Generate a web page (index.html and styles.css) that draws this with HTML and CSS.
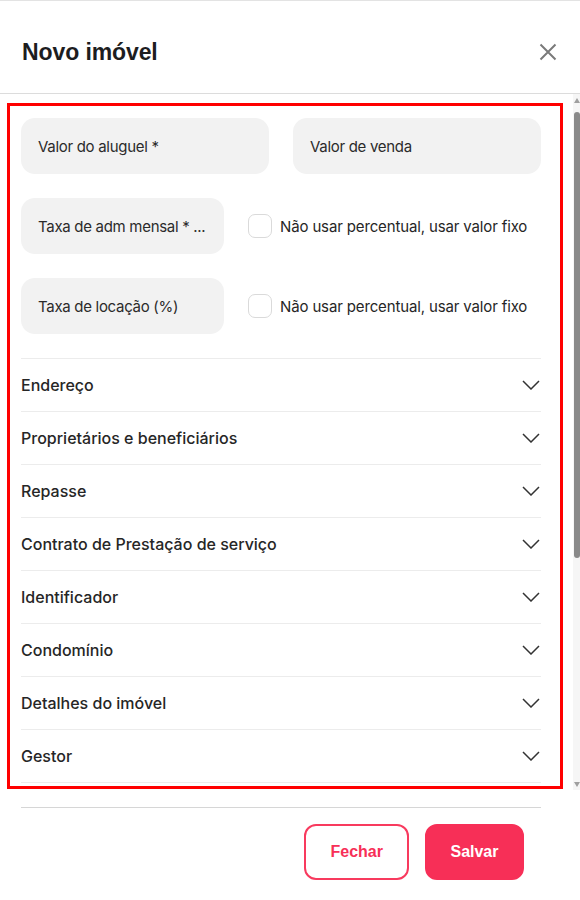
FILE: index.html
```html
<!DOCTYPE html>
<html lang="pt-BR">
<head>
<meta charset="utf-8">
<title>Novo imóvel</title>
<link rel="stylesheet" href="styles.css">
</head>
<body>
<div class="modal">
  <header class="modal-header">
    <h1 class="modal-title">Novo imóvel</h1>
    <button class="close-btn" aria-label="Fechar">
      <svg width="18" height="18" viewBox="0 0 18 18"><path d="M1.5 1.5 L16.5 16.5 M16.5 1.5 L1.5 16.5" stroke="#7a7a7a" stroke-width="2" fill="none"/></svg>
    </button>
  </header>
  <div class="modal-body">
    <div class="scroll-area">
      <div class="form">
        <div class="row two-col">
          <div class="field">Valor do aluguel *</div>
          <div class="field">Valor de venda</div>
        </div>
        <div class="row with-check">
          <div class="field">Taxa de adm mensal * ...</div>
          <label class="check"><span class="box"></span><span>Não usar percentual, usar valor fixo</span></label>
        </div>
        <div class="row with-check">
          <div class="field">Taxa de locação (%)</div>
          <label class="check"><span class="box"></span><span>Não usar percentual, usar valor fixo</span></label>
        </div>
        <div class="accordion">
          <div class="acc-item"><span>Endereço</span><svg class="chev" width="18" height="10" viewBox="0 0 18 10"><path d="M1 1 L9 9 L17 1" stroke="#333" stroke-width="1.5" fill="none"/></svg></div>
          <div class="acc-item"><span>Proprietários e beneficiários</span><svg class="chev" width="18" height="10" viewBox="0 0 18 10"><path d="M1 1 L9 9 L17 1" stroke="#333" stroke-width="1.5" fill="none"/></svg></div>
          <div class="acc-item"><span>Repasse</span><svg class="chev" width="18" height="10" viewBox="0 0 18 10"><path d="M1 1 L9 9 L17 1" stroke="#333" stroke-width="1.5" fill="none"/></svg></div>
          <div class="acc-item"><span>Contrato de Prestação de serviço</span><svg class="chev" width="18" height="10" viewBox="0 0 18 10"><path d="M1 1 L9 9 L17 1" stroke="#333" stroke-width="1.5" fill="none"/></svg></div>
          <div class="acc-item"><span>Identificador</span><svg class="chev" width="18" height="10" viewBox="0 0 18 10"><path d="M1 1 L9 9 L17 1" stroke="#333" stroke-width="1.5" fill="none"/></svg></div>
          <div class="acc-item"><span>Condomínio</span><svg class="chev" width="18" height="10" viewBox="0 0 18 10"><path d="M1 1 L9 9 L17 1" stroke="#333" stroke-width="1.5" fill="none"/></svg></div>
          <div class="acc-item"><span>Detalhes do imóvel</span><svg class="chev" width="18" height="10" viewBox="0 0 18 10"><path d="M1 1 L9 9 L17 1" stroke="#333" stroke-width="1.5" fill="none"/></svg></div>
          <div class="acc-item"><span>Gestor</span><svg class="chev" width="18" height="10" viewBox="0 0 18 10"><path d="M1 1 L9 9 L17 1" stroke="#333" stroke-width="1.5" fill="none"/></svg></div>
        </div>
      </div>
    </div>
    <div class="scrollbar">
      <span class="arrow up"></span>
      <span class="thumb"></span>
      <span class="rest"></span>
      <span class="arrow down"></span>
    </div>
  </div>
  <footer class="modal-footer">
    <div class="footer-line"></div>
    <div class="actions">
      <button class="btn btn-outline">Fechar</button>
      <button class="btn btn-primary">Salvar</button>
    </div>
  </footer>
</div>
</body>
</html>
```
FILE: styles.css
```css
* { box-sizing: border-box; }
html, body { margin: 0; padding: 0; background: #fff; }
body { font-family: Inter, "Noto Sans", sans-serif; color: #222; }

.modal {
  width: 580px;
  height: 900px;
  border-top: 1px solid #e3e3e3;
  display: flex;
  flex-direction: column;
  background: #fff;
}

.modal-header {
  height: 93px;
  flex: none;
  display: flex;
  align-items: center;
  justify-content: space-between;
  padding: 0 23px 0 22px;
  border-bottom: 1px solid #dcdcdc;
}
.modal-title {
  margin: 0;
  padding-top: 11px;
  font-family: "Liberation Sans", Arial, sans-serif;
  font-size: 23px;
  font-weight: 700;
  color: #1d1d1f;
  letter-spacing: -0.1px;
}
.close-btn {
  border: 0;
  background: none;
  padding: 0;
  width: 18px;
  height: 18px;
  margin-top: 9px;
  display: flex;
}

.modal-body {
  height: 696px;
  flex: none;
  display: flex;
}
.scroll-area {
  flex: 1;
  padding: 9px 10px 0 7px;
}
.form {
  height: 686px;
  border: 3px solid #ff0000;
  padding: 12px 19px 0 11px;
  overflow: hidden;
}

.row { display: flex; height: 56px; margin-bottom: 24px; align-items: center; }
.two-col { gap: 24px; }
.two-col .field { flex: 1; }
.with-check { gap: 24px; }
.with-check .field { width: 203px; flex: none; }

.field {
  height: 56px;
  background: #f2f2f2;
  border-radius: 14px;
  display: flex;
  align-items: center;
  padding: 0 17px;
  font-size: 15px;
  color: #2b2b2b;
  letter-spacing: -0.3px;
  white-space: nowrap;
}

.check {
  display: flex;
  align-items: center;
  gap: 8px;
  font-size: 15px;
  color: #262626;
  letter-spacing: -0.14px;
  white-space: nowrap;
}
.box {
  width: 24px;
  height: 24px;
  border: 1px solid #dadada;
  border-radius: 7px;
  background: #fff;
  flex: none;
}

.accordion { border-top: 1px solid #ececec; }
.acc-item {
  height: 53px;
  border-bottom: 1px solid #ececec;
  display: flex;
  align-items: center;
  justify-content: space-between;
  font-size: 16px;
  font-weight: 500;
  color: #262626;
  letter-spacing: 0;
}
.chev { margin-right: 1px; }

.scrollbar {
  width: 7px;
  flex: none;
  background: #f6f6f6;
  display: flex;
  flex-direction: column;
  align-items: center;
  padding: 4px 0 3px;
}
.arrow {
  width: 0;
  height: 0;
  border-left: 3.5px solid transparent;
  border-right: 3.5px solid transparent;
  flex: none;
}
.arrow.up { border-bottom: 5px solid #a0a0a0; }
.arrow.down { border-top: 5px solid #a0a0a0; }
.thumb {
  width: 6px;
  height: 446px;
  margin-top: 9px;
  background: #8a8a8a;
  border-radius: 3px;
  flex: none;
}
.rest { flex: 1; }

.modal-footer { flex: 1; padding: 17px 0 0; }
.footer-line {
  margin: 0 39px 0 21px;
  border-top: 1px solid #d6d6d6;
}
.actions {
  display: flex;
  justify-content: flex-end;
  gap: 16px;
  padding: 16px 56px 0 0;
}
.btn {
  height: 56px;
  border-radius: 12px;
  font-family: "Liberation Sans", Arial, sans-serif;
  font-size: 16px;
  font-weight: 700;
  cursor: pointer;
}
.btn-outline {
  padding: 0 24px;
  background: #fff;
  border: 2px solid #f83a5e;
  color: #f72f57;
}
.btn-primary {
  padding: 0 23.5px;
  background: #f72f57;
  border: 2px solid #f72f57;
  color: #fff;
}
```
